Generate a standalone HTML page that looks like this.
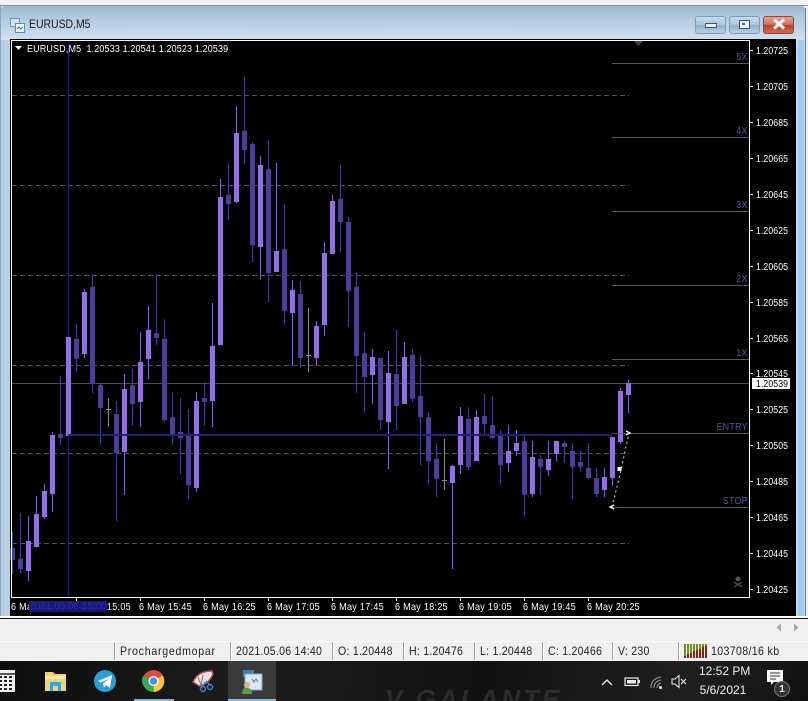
<!DOCTYPE html>
<html style="overflow:hidden;height:701px"><head><meta charset="utf-8"><style>
html,body{margin:0;padding:0}
body{width:808px;height:701px;overflow:hidden;position:relative;background:#f0f0f0;font-family:"Liberation Sans",sans-serif}
#w{position:absolute;left:0;top:0;width:808px;height:701px;overflow:hidden}
.a{position:absolute;white-space:nowrap}
.y{position:absolute;left:756px;margin-top:2px;color:#fff;font-size:10px;line-height:10px;letter-spacing:.1px;transform:scaleX(.87);transform-origin:0 0}
.yt{position:absolute;left:750px;width:3px;height:1px;background:#fff}
.x{position:absolute;top:603px;color:#fff;font-size:10px;line-height:10px;letter-spacing:.35px;transform:scaleX(.9);transform-origin:0 0;white-space:nowrap}
.xt{position:absolute;top:597px;width:1px;height:4px;background:#fff}
.r{position:absolute;right:60px;color:#4a58ac;font-size:10px;line-height:10px;letter-spacing:.2px;transform:scaleX(.9);transform-origin:100% 0}
.s{position:absolute;top:644px;color:#222;font-size:12px;line-height:14px;letter-spacing:.28px;transform:scaleX(.88);transform-origin:0 0;white-space:nowrap}
.sp{position:absolute;top:642px;width:1px;height:18px;background:#a0a0a0;border-right:1px solid #fff}
.btn{position:absolute;top:16px;height:16px;width:29px;border:1px solid #7f9bb6;border-radius:3px;background:linear-gradient(#c7dcee,#a9c4dc 48%,#8fafcb 52%,#b8d0e4)}
</style></head><body><div id="w">
<div class="a" style="left:0;top:0;width:808px;height:5px;background:#f2f2f2"></div>
<div class="a" style="left:0;top:5px;width:808px;height:1px;background:#8a8a8a"></div>
<div class="a" style="left:0;top:6px;width:806px;height:612px;border-radius:5px 5px 0 0;background:linear-gradient(90deg,#b9cfe6,#c2d6ea 50%,#c8dbee)"></div>
<div class="a" style="left:0;top:6px;width:806px;height:34px;border-radius:5px 5px 0 0;background:linear-gradient(#9db7d0,#b6cbe0 40%,#cfdfee)"></div>
<div class="a" style="left:805px;top:8px;width:1px;height:610px;background:#5f7f9c"></div>
<div class="a" style="left:0;top:6px;width:1px;height:612px;background:#8fa6bc"></div>
<div class="a" style="left:798px;top:40px;width:6px;height:577px;background:#9fcdf0"></div>
<svg class="a" style="left:10px;top:18px" width="15" height="15" viewBox="0 0 15 15"><rect x="0.5" y="0.5" width="9" height="8" fill="#cfe3f5" stroke="#6f94b8"/><rect x="5.5" y="5.5" width="9" height="9" fill="#eef6fc" stroke="#5f88ad"/><path d="M7 11l2-2 1.500 2 2-2" stroke="#3a6d98" fill="none"/></svg>
<div class="a" style="left:29px;top:17px;font-size:12px;line-height:14px;color:#1a1a1a;transform:scaleX(.87);transform-origin:0 0">EURUSD,M5</div>
<div class="btn" style="left:695px"></div><div class="btn" style="left:729px"></div>
<div class="btn" style="left:763px;border-color:#8f4a3c;background:linear-gradient(#e0a594,#cf6d58 48%,#b8402c 52%,#d06a50)"></div>
<div class="a" style="left:705px;top:23px;width:10px;height:3px;background:#e9f0f6;border:1px solid #3f566d"></div>
<div class="a" style="left:739px;top:20px;width:9px;height:7px;background:#e9f0f6;border:1px solid #3f566d"></div>
<div class="a" style="left:742px;top:23px;width:3px;height:2px;background:#506c86"></div>
<svg class="a" style="left:772px;top:18px" width="14" height="12"><path d="M2 1.500L12 10.500M12 1.500L2 10.500" stroke="#f5f5f5" stroke-width="3"/></svg>
<div class="a" style="left:10px;top:39px;width:786px;height:577px;background:#000"></div>
<svg class="a" style="left:0;top:0" width="808" height="701" shape-rendering="crispEdges" fill="none">
<path d="M12 95.500H629M12 185.500H629M12 275.500H629M12 365.500H629M12 453.500H629M12 543.500H629" stroke="#5a4a9c" stroke-dasharray="5 3"/>
<path d="M12 383.500H749" stroke="#4c4c4c"/>
<path d="M68.500 41V597" stroke="#201c72"/>
<path d="M28.500 516V581M36.500 496V547M44.500 484V519M52.500 432V512M84.500 289V358M124.500 374V495M140.500 332V427M148.500 306V379M196.500 392V492M212.500 303V427M220.500 179V345M236.500 106V203M260.500 156V279M276.500 163V272M292.500 280V365M316.500 321V365M324.500 242V336M332.500 195V254M372.500 349V404M388.500 351V469M404.500 342V404M452.500 465V569M460.500 407V474M476.500 410V461M508.500 425V472M516.500 430V456M532.500 441V497M548.500 441V476M556.500 441V461M604.500 468V497M612.500 437V486M620.500 388V444M628.500 380V413" stroke="#8066c4"/>
<path d="M12.500 532V574M20.500 513V573M60.500 376V445M76.500 324V372M92.500 274V393M100.500 384V445M116.500 401V521M132.500 369V426M156.500 274V345M164.500 319V422M172.500 392V445M180.500 398V474M188.500 409V499M204.500 382V426M228.500 163V220M244.500 77V164M252.500 142V262M268.500 140V302M284.500 204V325M300.500 281V368M340.500 165V252M348.500 217V327M356.500 272V393M364.500 332V413M380.500 358V430M396.500 330V430M412.500 349V402M420.500 355V465M428.500 412V485M436.500 443V497M468.500 407V470M484.500 394V435M492.500 396V439M500.500 430V485M524.500 435V517M540.500 455V495M564.500 441V463M572.500 443V499M580.500 450V472M588.500 443V479M596.500 468V497" stroke="#483d8b"/>
<path d="M108.500 398V427M106 409.500H111M308.500 308V372M306 355.500H311M444.500 439V490M442 480.500H447" stroke="#8f8f8f"/>
<path d="M28.500 541V571M36.500 514V547M44.500 491V517M52.500 435V494M68.500 337V436M84.500 292V354M124.500 389V452M140.500 362V402M148.500 330V359M196.500 401V488M212.500 346V401M220.500 197V345M236.500 133V202M260.500 165V247M276.500 251V272M292.500 290V313M316.500 326V358M324.500 253V325M332.500 201V254M372.500 357V375M388.500 373V422M404.500 357V404M452.500 466V483M460.500 416V465M476.500 417V461M508.500 451V463M516.500 443V451M532.500 457V494M548.500 459V470M556.500 441V454M604.500 477V490M612.500 437V478M620.500 391V442M628.500 383V395" stroke="#9370db" stroke-width="5"/>
<path d="M12.500 548V560M20.500 559V569M60.500 434V438M76.500 339V359M92.500 287V384M100.500 385V408M116.500 414V453M132.500 385V404M156.500 333V338M164.500 339V420M172.500 417V434M180.500 432V438M188.500 436V485M204.500 398V402M228.500 195V204M244.500 131V150M252.500 144V245M268.500 169V273M284.500 249V311M300.500 294V358M340.500 199V222M348.500 222V291M356.500 287V356M364.500 353V377M380.500 358V420M396.500 374V406M412.500 355V399M420.500 396V417M428.500 417V461M436.500 459V479M468.500 419V467M484.500 416V424M492.500 425V438M500.500 436V465M524.500 441V495M540.500 459V467M564.500 443V447M572.500 451V467M580.500 462V467M588.500 468V478M596.500 478V494" stroke="#4b3f90" stroke-width="5"/>
<path d="M68 435H612" stroke="#231e80" stroke-width="2"/>
<path d="M612 63.500H749M612 137.500H749M612 211.500H749M612 285.500H749M612 359.500H749M612 433.500H749M612 507.500H749" stroke="#3f4cc4"/>
</svg>
<svg class="a" style="left:0;top:0" width="808" height="701" fill="none">
<path d="M612 507L621 470 629 433" stroke="#cfd4ee" stroke-dasharray="2 3"/>
<rect x="617.500" y="467" width="4" height="4" fill="#fff"/>
<path d="M614 505l-4 2 4 2M626 431l4 2-4 2" stroke="#fff" stroke-width="1.300"/>
<path d="M634 41h9l-4.500 5z" fill="#444"/>
<path d="M15 46h7l-3.500 4z" fill="#fff"/>
<circle cx="738" cy="579" r="2.500" fill="#555"/><path d="M734 582l8 5M742 582l-8 5" stroke="#555" stroke-width="1.300"/>
</svg>
<div class="a" style="left:11px;top:40px;width:737px;height:556px;border:1px solid #fff"></div>
<div class="a" style="left:27px;top:44px;color:#fff;font-size:10px;line-height:11px;letter-spacing:.15px;transform:scaleX(.9);transform-origin:0 0">EURUSD,M5&nbsp; 1.20533 1.20541 1.20523 1.20539</div>
<div class="y" style="top:45px">1.20725</div><div class="yt" style="top:50px"></div>
<div class="y" style="top:81px">1.20705</div><div class="yt" style="top:86px"></div>
<div class="y" style="top:117px">1.20685</div><div class="yt" style="top:122px"></div>
<div class="y" style="top:153px">1.20665</div><div class="yt" style="top:158px"></div>
<div class="y" style="top:189px">1.20645</div><div class="yt" style="top:194px"></div>
<div class="y" style="top:225px">1.20625</div><div class="yt" style="top:230px"></div>
<div class="y" style="top:261px">1.20605</div><div class="yt" style="top:266px"></div>
<div class="y" style="top:297px">1.20585</div><div class="yt" style="top:302px"></div>
<div class="y" style="top:333px">1.20565</div><div class="yt" style="top:338px"></div>
<div class="y" style="top:368px">1.20545</div><div class="yt" style="top:373px"></div>
<div class="y" style="top:404px">1.20525</div><div class="yt" style="top:409px"></div>
<div class="y" style="top:440px">1.20505</div><div class="yt" style="top:445px"></div>
<div class="y" style="top:476px">1.20485</div><div class="yt" style="top:481px"></div>
<div class="y" style="top:512px">1.20465</div><div class="yt" style="top:517px"></div>
<div class="y" style="top:548px">1.20445</div><div class="yt" style="top:553px"></div>
<div class="y" style="top:584px">1.20425</div><div class="yt" style="top:589px"></div>
<div class="a" style="left:752px;top:378px;width:38px;height:11px;background:#fff"></div>
<div class="y" style="top:378px;color:#000">1.20539</div>
<div class="r" style="top:53px">5X</div><div class="r" style="top:127px">4X</div><div class="r" style="top:201px">3X</div><div class="r" style="top:275px">2X</div><div class="r" style="top:349px">1X</div><div class="r" style="top:423px">ENTRY</div><div class="r" style="top:497px">STOP</div>
<div class="xt" style="left:76px"></div><div class="xt" style="left:140px"></div><div class="xt" style="left:204px"></div><div class="xt" style="left:268px"></div><div class="xt" style="left:332px"></div><div class="xt" style="left:396px"></div><div class="xt" style="left:460px"></div><div class="xt" style="left:524px"></div><div class="xt" style="left:588px"></div>
<div class="x" style="left:11px">6 May 14:25</div><div class="x" style="left:78px">6 May 15:05</div><div class="x" style="left:139px">6 May 15:45</div><div class="x" style="left:203px">6 May 16:25</div><div class="x" style="left:267px">6 May 17:05</div><div class="x" style="left:331px">6 May 17:45</div><div class="x" style="left:395px">6 May 18:25</div><div class="x" style="left:459px">6 May 19:05</div><div class="x" style="left:523px">6 May 19:45</div><div class="x" style="left:587px">6 May 20:25</div>
<div class="a" style="left:29px;top:601px;width:78px;height:11px;background:#17177c;color:#2d2da6;font-size:10px;line-height:11px;text-align:center;overflow:hidden">2021.05.06 15:00</div>
<div class="a" style="left:0;top:616px;width:808px;height:2px;background:#fff"></div>
<div class="a" style="left:0;top:618px;width:808px;height:1px;background:#111"></div>
<div class="a" style="left:0;top:619px;width:808px;height:42px;background:#f0f0f0"></div>
<div class="a" style="left:0;top:641px;width:808px;height:1px;background:#fafafa"></div>
<svg class="a" style="left:774px;top:622px" width="28" height="11"><path d="M7 1.500L2.500 5.500 7 9.500zM20 1.500L24.500 5.500 20 9.500z" fill="#a6a6a6"/></svg>
<div class="sp" style="left:114px"></div><div class="sp" style="left:230px"></div><div class="sp" style="left:332px"></div><div class="sp" style="left:403px"></div><div class="sp" style="left:474px"></div><div class="sp" style="left:542px"></div><div class="sp" style="left:612px"></div><div class="sp" style="left:678px"></div>
<div class="s" style="left:120px;letter-spacing:.85px">Prochargedmopar</div>
<div class="s" style="left:236px">2021.05.06 14:40</div>
<div class="s" style="left:338px">O: 1.20448</div>
<div class="s" style="left:409px">H: 1.20476</div>
<div class="s" style="left:480px">L: 1.20448</div>
<div class="s" style="left:548px">C: 1.20466</div>
<div class="s" style="left:618px">V: 230</div>
<svg class="a" style="left:684px;top:644px" width="24" height="14" shape-rendering="crispEdges"><path d="M1 0V14M4 0V14M7 0V14M10 0V14M13 0V14M16 0V14M19 0V14M22 0V14" stroke="#6f8f1e" stroke-width="2"/><path d="M1 12V14M4 10V14M7 9V14M10 7V14M13 6V14M16 5V14M19 3V14M22 2V14" stroke="#8f1e14" stroke-width="2"/></svg>
<div class="s" style="left:711px;letter-spacing:.42px">103708/16 kb</div>
<div class="a" style="left:0;top:661px;width:808px;height:40px;background:linear-gradient(100deg,#0d0d0d,#1c1c1c 30%,#121212 60%,#1f1f1f 85%,#121212)"></div>
<div class="a" style="left:385px;top:684px;color:#2c2c2c;font-size:26px;line-height:30px;font-style:italic;font-weight:bold;letter-spacing:3px;height:17px;overflow:hidden">V GALANTE</div>
<div class="a" style="left:228px;top:661px;width:48px;height:40px;background:#3a3a3a"></div>
<div class="a" style="left:134px;top:699px;width:40px;height:2px;background:#76b9ed"></div>
<div class="a" style="left:228px;top:699px;width:48px;height:2px;background:#76b9ed"></div>
<svg class="a" style="left:0;top:661px" width="808" height="40">
<path d="M0 9h15v22H0z" fill="#f2f2f2"/><path d="M0 13h15" stroke="#222" stroke-width="1.500"/>
<path d="M0 16h2M4 16h3M9 16h3M0 20h2M4 20h3M9 20h3M0 24h2M4 24h3M9 24h3M0 28h2M4 28h3M9 28h3" stroke="#222" stroke-width="2"/>
<path d="M45 11h8l2 2h11v17H45z" fill="#f5d36b"/><path d="M45 15h21v3H45z" fill="#fbe8a6"/><rect x="50" y="21" width="11" height="9" fill="#39a3dc"/><rect x="53" y="25" width="5" height="5" fill="#f5d36b"/>
<circle cx="105" cy="20" r="11" fill="#2a9fd6"/><path d="M98 20l14-6-2 13-4-3-2 2.500-1-4 6-5-8 4z" fill="#fff"/>
<circle cx="153.500" cy="20" r="11" fill="#dd4b3e"/><path d="M153.500 20L144 25.500a11 11 0 0 0 10 5.500z" fill="#3aa757"/><path d="M153.500 20l.5 11a11 11 0 0 0 10-11 11 11 0 0 0-1.500-5.500z" fill="#fcc934"/><path d="M153.500 20L144 25.500a11 11 0 0 1-1-11z" fill="#3aa757"/><circle cx="153.500" cy="20" r="5" fill="#fff"/><circle cx="153.500" cy="20" r="3.800" fill="#4a8ff0"/>
<path d="M193 21c3-7 9-11 19-11l1 3c-3 7-8 11-14 12z" fill="#e8e3df" stroke="#b84a4f" stroke-width="1.500"/><path d="M203 14l-2 10M198 16l3 8" stroke="#777"/><circle cx="203" cy="28" r="2.500" fill="none" stroke="#3a88c8" stroke-width="1.500"/><circle cx="210" cy="26" r="2.500" fill="none" stroke="#3a88c8" stroke-width="1.500"/><path d="M203 25l2-4M209 23l-3-3" stroke="#3a88c8" stroke-width="1.500"/>
<rect x="243" y="9" width="11" height="7" fill="#3a7fc0"/><rect x="245" y="13" width="17" height="16" fill="#dbe6f2" stroke="#8aa8c8"/><path d="M252 18l2 3 2-3 2 3" stroke="#4a78b0" fill="none"/><circle cx="247" cy="24" r="3" fill="#e0b088"/><path d="M242 33c0-5 2-6 5-6s5 1 5 6z" fill="#5a9f3a"/>
<path d="M602 24l5-5 5 5" stroke="#eee" fill="none" stroke-width="1.300"/>
<rect x="625" y="17" width="13" height="7.500" fill="none" stroke="#eee" stroke-width="1.200"/><rect x="627" y="19" width="9" height="3.500" fill="#eee"/><rect x="638.500" y="19" width="1.500" height="3" fill="#eee"/>
<path d="M651 27c0-6 3-10 10-11M654 27c0-4 2-7 7-8M657 27c0-2 1-4 4-5" stroke="#999" fill="none"/><circle cx="660.500" cy="26.500" r="1.500" fill="#eee"/>
<path d="M672 18h3l4-3.500v12L675 23h-3z" fill="none" stroke="#eee"/><path d="M681 18l5 5M686 18l-5 5" stroke="#eee" stroke-width="1.100"/>
<path d="M767 9h16v12h-9l-3 3v-3h-4z" fill="#f6f6f6"/><path d="M770 12h10M770 15h10M770 18h6" stroke="#333"/>
<circle cx="782" cy="28" r="7.500" fill="#333" stroke="#777" stroke-width="1"/>
</svg>
<div class="a" style="left:699px;top:664px;width:48px;text-align:center;color:#eee;font-size:12px;line-height:14px">12:52 PM</div>
<div class="a" style="left:699px;top:683px;width:48px;text-align:center;color:#eee;font-size:12px;line-height:14px">5/6/2021</div>
<div class="a" style="left:777px;top:684px;width:10px;text-align:center;color:#eee;font-size:10px;line-height:11px;font-weight:bold">1</div>
</div></body></html>
